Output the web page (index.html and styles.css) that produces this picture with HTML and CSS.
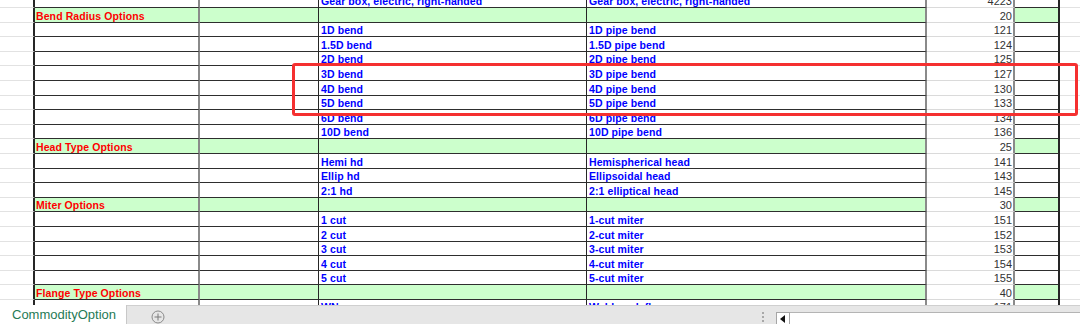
FILE: index.html
```html
<!DOCTYPE html>
<html>
<head>
<meta charset="utf-8">
<link rel="stylesheet" href="styles.css">
</head>
<body>
<div class="app">
  <div class="sheet">
    <div class="row first"><div class="cell c-a"></div><div class="cell c-b"></div><div class="cell c-c"></div><div class="cell c-d">Gear box, electric, right-handed</div><div class="cell c-e">Gear box, electric, right-handed</div><div class="cell c-f">4223</div><div class="cell c-g"></div><div class="cell c-h"></div></div>
    <div class="row sec"><div class="cell c-a"></div><div class="cell c-b">Bend Radius Options</div><div class="cell c-c"></div><div class="cell c-d"></div><div class="cell c-e"></div><div class="cell c-f">20</div><div class="cell c-g"></div><div class="cell c-h"></div></div>
    <div class="row"><div class="cell c-a"></div><div class="cell c-b"></div><div class="cell c-c"></div><div class="cell c-d">1D bend</div><div class="cell c-e">1D pipe bend</div><div class="cell c-f">121</div><div class="cell c-g"></div><div class="cell c-h"></div></div>
    <div class="row"><div class="cell c-a"></div><div class="cell c-b"></div><div class="cell c-c"></div><div class="cell c-d">1.5D bend</div><div class="cell c-e">1.5D pipe bend</div><div class="cell c-f">124</div><div class="cell c-g"></div><div class="cell c-h"></div></div>
    <div class="row"><div class="cell c-a"></div><div class="cell c-b"></div><div class="cell c-c"></div><div class="cell c-d">2D bend</div><div class="cell c-e">2D pipe bend</div><div class="cell c-f">125</div><div class="cell c-g"></div><div class="cell c-h"></div></div>
    <div class="row"><div class="cell c-a"></div><div class="cell c-b"></div><div class="cell c-c"></div><div class="cell c-d">3D bend</div><div class="cell c-e">3D pipe bend</div><div class="cell c-f">127</div><div class="cell c-g"></div><div class="cell c-h"></div></div>
    <div class="row"><div class="cell c-a"></div><div class="cell c-b"></div><div class="cell c-c"></div><div class="cell c-d">4D bend</div><div class="cell c-e">4D pipe bend</div><div class="cell c-f">130</div><div class="cell c-g"></div><div class="cell c-h"></div></div>
    <div class="row"><div class="cell c-a"></div><div class="cell c-b"></div><div class="cell c-c"></div><div class="cell c-d">5D bend</div><div class="cell c-e">5D pipe bend</div><div class="cell c-f">133</div><div class="cell c-g"></div><div class="cell c-h"></div></div>
    <div class="row"><div class="cell c-a"></div><div class="cell c-b"></div><div class="cell c-c"></div><div class="cell c-d">6D bend</div><div class="cell c-e">6D pipe bend</div><div class="cell c-f">134</div><div class="cell c-g"></div><div class="cell c-h"></div></div>
    <div class="row"><div class="cell c-a"></div><div class="cell c-b"></div><div class="cell c-c"></div><div class="cell c-d">10D bend</div><div class="cell c-e">10D pipe bend</div><div class="cell c-f">136</div><div class="cell c-g"></div><div class="cell c-h"></div></div>
    <div class="row sec"><div class="cell c-a"></div><div class="cell c-b">Head Type Options</div><div class="cell c-c"></div><div class="cell c-d"></div><div class="cell c-e"></div><div class="cell c-f">25</div><div class="cell c-g"></div><div class="cell c-h"></div></div>
    <div class="row"><div class="cell c-a"></div><div class="cell c-b"></div><div class="cell c-c"></div><div class="cell c-d">Hemi hd</div><div class="cell c-e">Hemispherical head</div><div class="cell c-f">141</div><div class="cell c-g"></div><div class="cell c-h"></div></div>
    <div class="row"><div class="cell c-a"></div><div class="cell c-b"></div><div class="cell c-c"></div><div class="cell c-d">Ellip hd</div><div class="cell c-e">Ellipsoidal head</div><div class="cell c-f">143</div><div class="cell c-g"></div><div class="cell c-h"></div></div>
    <div class="row"><div class="cell c-a"></div><div class="cell c-b"></div><div class="cell c-c"></div><div class="cell c-d">2:1 hd</div><div class="cell c-e">2:1 elliptical head</div><div class="cell c-f">145</div><div class="cell c-g"></div><div class="cell c-h"></div></div>
    <div class="row sec"><div class="cell c-a"></div><div class="cell c-b">Miter Options</div><div class="cell c-c"></div><div class="cell c-d"></div><div class="cell c-e"></div><div class="cell c-f">30</div><div class="cell c-g"></div><div class="cell c-h"></div></div>
    <div class="row"><div class="cell c-a"></div><div class="cell c-b"></div><div class="cell c-c"></div><div class="cell c-d">1 cut</div><div class="cell c-e">1-cut miter</div><div class="cell c-f">151</div><div class="cell c-g"></div><div class="cell c-h"></div></div>
    <div class="row"><div class="cell c-a"></div><div class="cell c-b"></div><div class="cell c-c"></div><div class="cell c-d">2 cut</div><div class="cell c-e">2-cut miter</div><div class="cell c-f">152</div><div class="cell c-g"></div><div class="cell c-h"></div></div>
    <div class="row"><div class="cell c-a"></div><div class="cell c-b"></div><div class="cell c-c"></div><div class="cell c-d">3 cut</div><div class="cell c-e">3-cut miter</div><div class="cell c-f">153</div><div class="cell c-g"></div><div class="cell c-h"></div></div>
    <div class="row"><div class="cell c-a"></div><div class="cell c-b"></div><div class="cell c-c"></div><div class="cell c-d">4 cut</div><div class="cell c-e">4-cut miter</div><div class="cell c-f">154</div><div class="cell c-g"></div><div class="cell c-h"></div></div>
    <div class="row"><div class="cell c-a"></div><div class="cell c-b"></div><div class="cell c-c"></div><div class="cell c-d">5 cut</div><div class="cell c-e">5-cut miter</div><div class="cell c-f">155</div><div class="cell c-g"></div><div class="cell c-h"></div></div>
    <div class="row sec"><div class="cell c-a"></div><div class="cell c-b">Flange Type Options</div><div class="cell c-c"></div><div class="cell c-d"></div><div class="cell c-e"></div><div class="cell c-f">40</div><div class="cell c-g"></div><div class="cell c-h"></div></div>
    <div class="row"><div class="cell c-a"></div><div class="cell c-b"></div><div class="cell c-c"></div><div class="cell c-d">WN</div><div class="cell c-e">Weld neck flange</div><div class="cell c-f">171</div><div class="cell c-g"></div><div class="cell c-h"></div></div>
    <div class="highlight"></div>
  </div>
  <div class="tabbar">
    <div class="tab">CommodityOption</div>
    <div class="tab-rest">
      <svg class="add" width="14" height="14" viewBox="0 0 14 14"><circle cx="7" cy="7" r="6" fill="none" stroke="#8a8a8a" stroke-width="1"/><path d="M7 3.5V10.5M3.5 7H10.5" stroke="#7a7a7a" stroke-width="1"/></svg>
      <div class="spacer"></div>
      <div class="grip"></div>
      <div class="scroll-btn"><svg width="6" height="8" viewBox="0 0 6 8"><path d="M5 0V8L0 4Z" fill="#111"/></svg></div>
      <div class="scroll-track"></div>
    </div>
  </div>
</div>
</body>
</html>
```
FILE: styles.css
```css
html, body {
  margin: 0;
  padding: 0;
  background: #fff;
}
.app {
  width: 1080px;
  height: 324px;
  display: flex;
  flex-direction: column;
  overflow: hidden;
}
.sheet {
  position: relative;
  height: 305px;
  flex: none;
  overflow: hidden;
}
.row {
  display: flex;
  height: 14.6px;
}
.row.first {
  height: 8px;
}
.cell {
  box-sizing: border-box;
  height: 100%;
  flex: none;
  display: flex;
  align-items: flex-end;
  overflow: hidden;
  white-space: nowrap;
  padding-left: 2px;
  border-bottom: 1px solid #2e2e2e;
  font-family: "Liberation Sans", Arial, sans-serif;
  font-weight: bold;
  font-size: 10.5px;
  letter-spacing: 0.1px;
  line-height: 12px;
}
.c-a {
  width: 35px;
  border-right: 2px solid #262626;
  border-bottom-color: #e2e2e2;
}
.c-b {
  width: 165px;
  border-right: 2px solid #8a8a8a;
  color: #ff0000;
  padding-left: 1px;
}
.c-c {
  width: 119px;
  border-right: 1px solid #262626;
}
.c-d {
  width: 268px;
  border-right: 1px solid #262626;
  color: #0000ff;
}
.c-e {
  width: 340px;
  border-right: 2px solid #8a8a8a;
  color: #0000ff;
}
.c-f {
  width: 88px;
  border-right: 2px solid #8a8a8a;
  border-bottom-color: #dadada;
  justify-content: flex-end;
  padding-left: 0;
  padding-right: 1px;
  font-weight: normal;
  font-size: 11px;
  letter-spacing: 0;
  color: #333;
}
.c-g {
  width: 45px;
  border-right: 2px solid #262626;
}
.c-h {
  flex: 1;
  border-bottom-color: #e2e2e2;
}
.row.sec .c-b,
.row.sec .c-c,
.row.sec .c-d,
.row.sec .c-e,
.row.sec .c-g {
  background: #ccffcc;
}
.highlight {
  position: absolute;
  left: 292px;
  top: 63px;
  width: 786px;
  height: 53px;
  box-sizing: border-box;
  border: 3px solid #f53030;
  border-radius: 3px;
}
.tabbar {
  flex: 1;
  display: flex;
  background: #e6e6e6;
  font-family: "Liberation Sans", Arial, sans-serif;
}
.tab {
  width: 127px;
  box-sizing: border-box;
  background: #fff;
  color: #267a55;
  font-size: 13px;
  line-height: 19px;
  padding-left: 12px;
  border-right: 1px solid #c8c8c8;
}
.tab-rest {
  flex: 1;
  display: flex;
  align-items: flex-end;
  border-top: 1px solid #cfcfcf;
}
.add {
  margin: 0 0 0 24px;
  align-self: center;
  margin-top: 3px;
}
.spacer {
  flex: 1;
}
.grip {
  width: 2px;
  height: 10px;
  margin-bottom: 2px;
  margin-right: 12px;
  background: repeating-linear-gradient(to bottom, #a8a8a8 0 2px, transparent 2px 4px);
}
.scroll-btn {
  width: 14px;
  height: 12px;
  box-sizing: border-box;
  background: #fff;
  border: 1px solid #a6a6a6;
  border-bottom: none;
  display: flex;
  align-items: center;
  justify-content: center;
}
.scroll-track {
  width: 290px;
  height: 12px;
  box-sizing: border-box;
  background: #fff;
  border-top: 1px solid #b4b4b4;
}
```
